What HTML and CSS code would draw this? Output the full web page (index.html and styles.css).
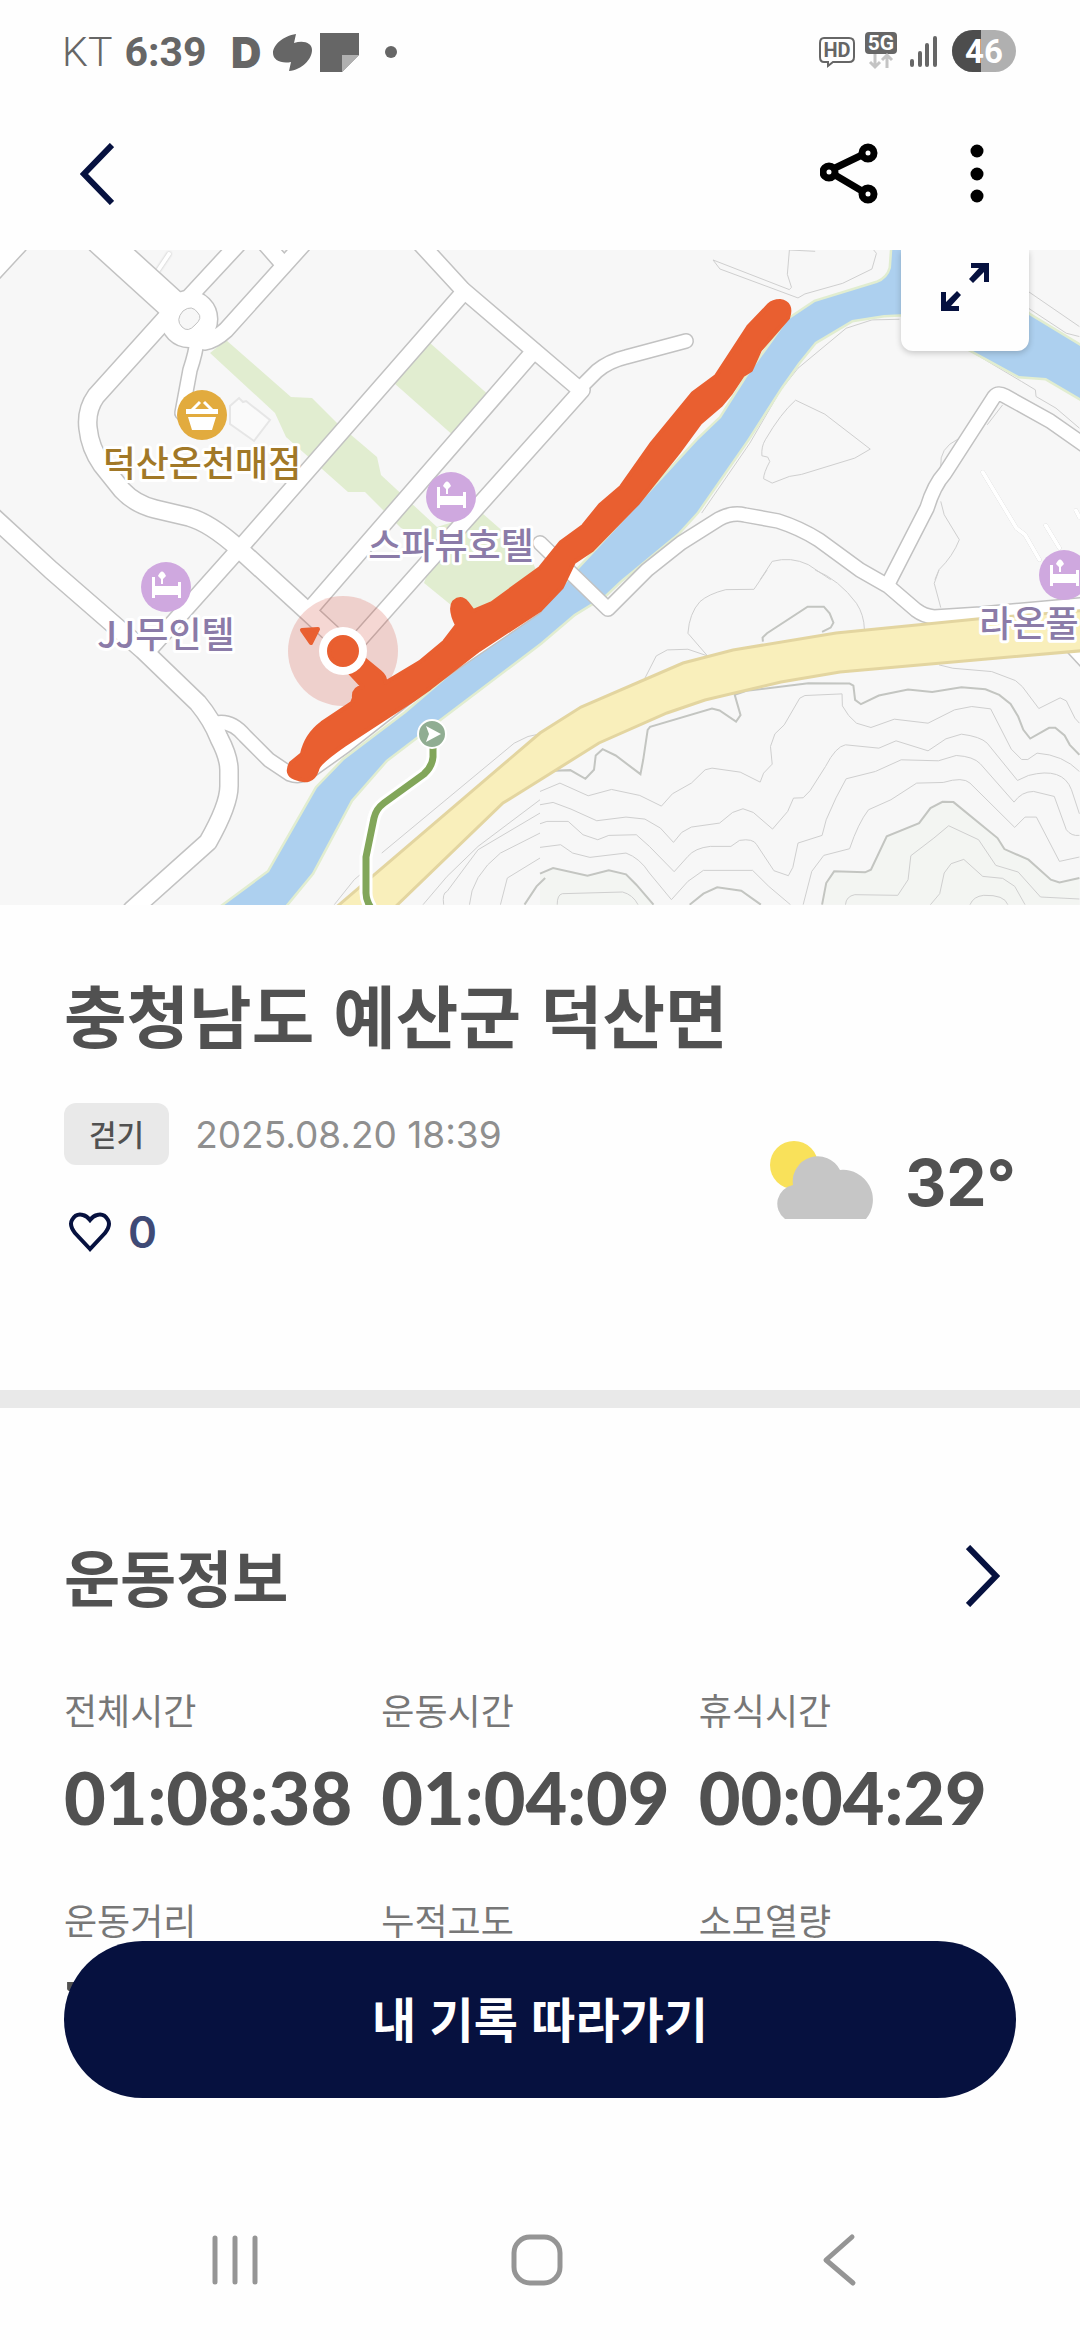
FILE: index.html
```
<!DOCTYPE html>
<html lang="ko">
<head>
    <meta charset="UTF-8">
    <meta name="viewport" content="width=device-width, initial-scale=1.0">
    <title>충청남도 예산군 덕산면</title>
    <link rel="stylesheet" href="styles.css">
</head>
<body>

    <div class="status-bar">
        <div class="status-left">
            <span class="carrier">KT</span>
            <span class="clock">6:39</span>
            <svg class="status-apps" width="176" height="56" viewBox="225 24 176 56">
                <text class="app-d" x="229" y="68">D</text>
                <path d="M294 34 C281 36 271 45 271 53 C271 60 279 64 289 62 L287 71 C300 70 310 59 310 50 C310 43 302 40 292 43 Z"/>
                <path d="M318 33 H357 V55 L340 72 H318 Z"/>
                <path class="fold" d="M340 55 H357 L340 72 Z"/>
                <circle cx="389" cy="52" r="6"/>
            </svg>
        </div>
        <svg class="status-right" width="200" height="44" viewBox="818 30 200 44">
            <path class="line" d="M824 38 H849 Q854 38 854 43 V57 Q854 62 849 62 H833 L828 66 V62 H824 Q820 62 820 57 V43 Q820 38 824 38 Z"/>
            <text class="hd" x="837" y="57">HD</text>
            <rect x="865" y="32" width="32" height="22" rx="4"/>
            <text class="fiveg" x="881" y="50">5G</text>
            <path class="arrows" d="M875 54 V67 M870 62 L875 67 L880 62 M887 68 V55 M882 60 L887 55 L892 60"/>
            <path class="signal" d="M912 61 V65 M920 53 V65 M927 45 V65 M935 38 V65"/>
            <rect class="battery-rest" x="952" y="30" width="64" height="42" rx="21"/>
            <path class="battery-full" d="M981 30 H973 A21 21 0 0 0 973 72 H981 Z"/>
            <text class="battery-text" x="984" y="63">46</text>
        </svg>
    </div>

    <header class="app-bar">
        <button class="icon-button" type="button" aria-label="뒤로">
            <svg width="34" height="62" viewBox="0 0 34 62"><path class="chevron" d="M32 2 L4 31 L32 60"/></svg>
        </button>
        <div class="app-actions">
            <button class="icon-button" type="button" aria-label="공유">
                <svg width="58" height="62" viewBox="821 145 58 62">
                    <path class="share" d="M836 170 L863 157 M836 177 L863 193"/>
                    <circle class="share" cx="830" cy="174" r="6"/>
                    <circle class="share" cx="869" cy="155" r="6"/>
                    <circle class="share" cx="869" cy="196" r="6"/>
                </svg>
            </button>
            <button class="icon-button" type="button" aria-label="더보기">
                <svg width="14" height="62" viewBox="0 0 14 62">
                    <circle cx="7" cy="8" r="6.5"/><circle cx="7" cy="31" r="6.5"/><circle cx="7" cy="53" r="6.5"/>
                </svg>
            </button>
        </div>
    </header>

    <div class="map">
        <svg class="map-svg" viewBox="0 250 1080 655" preserveAspectRatio="xMidYMid slice">
            <defs>
                <g id="roads">
                    <path class="road w24" d="M-9 269 L16 242"/>
                    <path class="road w30" d="M101 240 L178 310"/>
                    <path class="road w18" d="M178 305 L96 396 Q86 410 88 428 Q90 448 102 465 L122 490 Q135 504 155 509 L189 517 Q210 523 238 548 L306 610 L332 634"/>
                    <path class="road w16" d="M242 240 L190 296"/>
                    <path class="road w16" d="M307 240 L226 330 Q215 340 205 342"/>
                    <path class="road w16" d="M262 240 L284 265"/>
                    <path class="road w14" d="M197 340 Q196 352 190 370 L182 413"/>
                    <circle class="road w38" cx="189" cy="319" r="10"/>
                    <path class="road w16" d="M463 293 L240 548 L148 651"/>
                    <path class="road w16" d="M417 240 L463 290 L578 388"/>
                    <path class="road w16" d="M534 351 L344 570 L312 607"/>
                    <path class="road w16" d="M582 390 L421 570 L358 641"/>
                    <path class="road w14" d="M578 390 L597 371 Q609 361 626 357 L686 341"/>
                    <path class="road w18" d="M-10 514 L51 570 L143 650 L198 703 Q212 720 219 738 Q229 757 229 770 V786 Q229 805 208 842 L132 910"/>
                    <path class="road w14" d="M212 724 Q230 718 245 736 L269 760 L290 774 Q300 778 310 771 L345 746 L425 683 L535 608"/>
                    <path class="road w14" d="M540 543 L608 609 L647 570 L681 543 L719 519 Q732 512 745 515 L778 521 Q800 528 819 540 L860 570 L888 586 L916 610 Q924 616 934 617 L981 614 L1090 604"/>
                    <path class="road w14" d="M888 584 L927 508 Q934 485 945 473 L994 397 Q998 392 1005 396 L1050 421 L1090 449"/>
                    <path class="road w14" d="M1066 640 L1090 666"/>
                </g>
            </defs>

            <rect class="land" x="0" y="250" width="1080" height="655"/>

            <!-- parks -->
            <path class="park" d="M226 340 L291 397 L312 398 L337 423 L377 457 L381 475 L437 527 L482 513 L530 555 L540 580 L475 612 L451 605 L424 583 L437 545 L401 528 L365 492 L348 492 L286 437 L275 413 L210 353 Z"/>
            <path class="park" d="M430 343 L491 397 L455 437 L394 383 Z"/>

            <!-- contour lines -->
            <g class="contour" transform="translate(540 570) scale(.344 .333)">
                <path class="hill" d="M0 912 L38 895 L138 918 L200 902 L250 914 L280 945 L330 1010 H0 Z M820 1005 L832 940 L855 905 L945 908 L962 900 L1008 800 L1102 760 L1135 715 L1170 696 L1202 697 L1330 805 L1350 838 L1420 870 L1485 930 L1510 938 L1568 925 V1005 Z"/>
                <path class="thick" d="M40 603 L88 601 L132 627 L157 600 L162 557 L182 538 L220 557 L292 613 L300 570 L313 480 L320 471 L500 416 L522 422 L570 455 L583 436 L566 375 L600 363 L780 340 L900 341 L911 347 L916 390 L933 403 L985 377 L1070 359 L1140 366 L1225 352 L1295 358 L1335 375 L1368 402 L1390 440 L1405 480 L1425 506 L1480 474 L1498 474 L1525 497 L1540 525 L1568 555"/>
                <path class="thick" d="M0 912 L38 895 L138 918 L200 902 L250 914 L280 945 L330 1005 M435 1005 L475 972 L515 953 L585 963 L642 1005"/>
                <path class="thick" d="M820 1005 L832 940 L855 905 L945 908 L962 900 L1008 800 L1102 760 L1135 715 L1170 696 L1202 697 L1330 805 L1350 838 L1420 870 L1485 930 L1510 938 L1568 925"/>
                <path class="thick" d="M648 215 L647 203 L660 190 L778 110 L825 110 L842 130 L853 158 L845 173 L820 186"/>
                <path d="M305 325 L338 258 L370 240 L430 238 L487 258 L430 190 Q434 130 465 95 Q490 72 540 59 L622 58 L660 0 M800 0 Q870 30 920 100 Q942 135 943 178"/>
                <path d="M1160 0 L1146 40 L1165 113 M1160 285 L1200 295 L1313 305 L1382 332 L1402 350 L1450 416 L1512 384 L1530 393 L1555 445 L1568 460"/>
                <path d="M0 665 L58 640 L140 678 L208 659 L290 677 L353 709 L385 672 L440 640 L480 600 L500 595 L582 607 L640 637 L650 610 L675 583 L670 530 L683 492 L710 465 L755 385 L770 377 L878 372 L879 408 Q895 440 920 460 L962 473 L1030 448 L1128 460 L1205 420 L1255 410 L1310 417 L1370 538 L1400 569 L1418 569 L1445 550 Q1520 555 1568 605"/>
                <path d="M0 705 L38 698 L90 718 L165 753 L250 742 L305 748 L350 775 L388 818 L412 788 L440 772 L522 760 L560 728 L590 717 L620 728 L676 778 L720 725 L737 685 L765 684 L785 663 L830 590 Q860 530 888 525 L985 535 L1035 513 L1128 543 L1180 507 L1225 493 Q1280 500 1300 520 L1388 632 L1420 617 Q1520 590 1545 660 L1568 732"/>
                <path d="M0 762 L20 755 L82 755 L125 795 L168 810 L200 797 L280 795 L318 830 L390 906 L430 860 Q450 835 495 830 L555 830 L580 812 Q620 805 630 825 L680 903 L722 918 L735 893 L750 820 L820 797 L832 750 Q860 680 890 627 L975 605 L1050 570 L1158 573 L1210 557 Q1260 560 1280 582 L1378 697 Q1400 665 1435 665 L1495 680 L1530 780 Q1545 800 1568 797"/>
                <path d="M0 833 L60 825 L95 850 L145 863 L250 850 Q290 865 318 910 L382 990 L430 935 L475 902 L618 902 L665 950 L728 1005 M765 1005 L790 905 L825 857 L900 837 Q925 760 955 720 L1020 690 L1095 640 L1172 638 Q1230 620 1250 640 L1380 773 L1410 742 L1443 742 L1510 875 L1568 862"/>
                <path d="M50 1005 Q50 975 65 972 L240 967 Q270 975 285 1005 M888 1005 Q890 980 915 975 L1040 977 L1070 930 L1078 858 L1145 805 L1188 768 L1275 810 L1325 887 L1390 907 L1455 982 L1568 988 M1135 1005 L1162 972 L1175 910 L1195 882 L1232 869 L1287 920 L1345 926 L1380 950 L1410 1005 M1250 1005 Q1260 980 1290 977 Q1350 975 1360 1005"/>
                <path d="M-598 1005 L-540 930 L-500 895 M-460 850 L-75 520 L-35 500 L0 492 M-340 1005 L-270 920 L-180 830 L0 690 M-280 1005 Q-285 970 -270 965 L-180 840 L0 730 M-205 1005 Q-200 920 -115 850 L0 790 M-115 1005 L-95 925 L0 865"/>
                <path class="thick" d="M-45 1005 L-10 950 L15 925"/>
            </g>
            <g class="contour" transform="translate(540 240) scale(.344 .333)">
                <path d="M503 60 L725 149 L731 142 L719 103 L725 30 M503 60 L523 87 L750 174 L770 162 L880 130 L965 87 L978 40 L970 30 M725 30 L800 34"/>
                <path d="M743 481 L828 523 L960 628 L915 655 L760 704 L725 710 L675 730 L650 717 Q650 700 668 665 L662 652 L645 648 Q643 620 655 600 Q700 520 743 481 Z"/>
                <path d="M1045 238 L965 240 L890 265 L750 385 L700 450 L610 610 L470 820 M1250 333 L1400 425 L1440 450 L1442 470 L1500 505 L1568 565"/>
                <path d="M1345 495 L1300 555 M1215 598 Q1160 625 1165 680 M1165 785 L1175 825 L1219 900 Q1200 950 1160 990 L1148 1020 M1420 155 L1568 260 M1420 205 L1530 280 L1568 290"/>
                <path d="M640 1020 L675 965 Q730 950 780 975 L845 1020"/>
                <path class="lane" d="M1287 697 L1385 865 L1410 885 L1452 960 M1470 857 L1510 925 M1558 812 L1568 832"/>
            </g>
            <path class="building" d="M230 406 L239 398 L243 402 L246 401 L270 420 L254 441 L230 424 Z"/>
            <path class="lane" d="M169 254 L157 272"/>

            <!-- river -->
            <path class="river" d="M893 240 L891 268 Q888 279 877 283 L815 302 L788 320 L747 377 L721 418 L698 440 L640 503 L578 570 L540 612 L448 677 L406 713 L344 760 L317 788 L269 872 L215 912 L280 912 L312 873 L351 800 L386 760 L441 718 L540 643 L574 614 L605 595 L621 580 L678 533 L697 512 L747 440 L781 387 L798 363 L815 342 L852 320 L884 315 L905 314 L953 340 L1019 376 L1046 378 L1090 404 L1090 352 L1029 315 L960 240 Z"/>

            <use href="#roads" class="road-edge"/>
            <use href="#roads" class="road-fill"/>
            <path class="island" d="M183 311 Q192 304 198 313 Q203 318 195 325 Q188 333 182 327 Q175 320 183 311 Z"/>

            <!-- highway -->
            <path class="highway" d="M333 910 L540 733 L581 707 L683 663 L733 650 L836 633 L977 619 L1090 610 V650 L840 672 L781 682 L705 700 L667 713 L599 743 L540 780 L503 803 L392 910 Z"/>

            <!-- walking trail -->
            <path class="trail-edge" d="M433 746 V757 Q432 767 424 774 L384 803 Q376 809 374 818 L366 857 V893 Q366 900 371 908"/>
            <path class="trail" d="M433 746 V757 Q432 767 424 774 L384 803 Q376 809 374 818 L366 857 V893 Q366 900 371 908"/>
            <circle class="trail-pin" cx="432" cy="734" r="14"/>
            <path class="white" d="M426 726 L441 734 L426 742 L429 734 Z"/>

            <!-- recorded track -->
            <circle class="halo" cx="343" cy="651" r="55"/>
            <path class="track" d="M780 301 Q773 301 769 305 L748 327 L733 350 L716 376 L693 393 L652 443 L621 487 L600 505 L583 526 L561 542 L540 568 L492 603 L473 611 L467 603 Q461 596 454 602 Q449 609 457 625 L444 642 L420 662 L385 683 Q386 677 380 672 L363 658 L349 672 L363 687 Q353 688 354 698 L352 703 L322 723 Q306 735 302 754 L291 763 Q285 774 295 778 Q312 785 317 770 Q318 763 344 745 L413 700 L430 688 L479 650 L540 610 L562 587 L574 562 L592 550 L638 503 L678 453 L700 423 L721 405 L731 393 L743 375 L751 370 L760 350 L788 318 Q793 303 780 301 Z"/>
            <path class="track" d="M302 630 L318 629 L311 643 Z"/>
            <circle class="white" cx="343" cy="651" r="24"/>
            <circle class="track" cx="343" cy="651" r="14"/>

            <!-- places -->
            <circle class="shop-pin" cx="202" cy="415" r="25"/>
            <path class="white" d="M186 409 H218 V414 H186 Z M188 417 H216 L212 430 H192 Z"/>
            <path class="basket" d="M192 410 L200 402 M212 410 L204 402"/>
            <g id="hotel">
                <circle class="hotel-pin" cx="451" cy="497" r="25"/>
                <path class="white" d="M437 487 H440 V496 H463 V492 H466 V508 H463 V505 H440 V508 H437 Z M446 489 L443 486 Q447 477 451 486 L448 489 V494 H446 Z"/>
            </g>
            <use href="#hotel" x="-285" y="90"/>
            <use href="#hotel" x="613" y="78"/>
            <text class="place shop" x="202" y="477">덕산온천매점</text>
            <text class="place" x="451" y="559">스파뷰호텔</text>
            <text class="place" x="166" y="648">JJ무인텔</text>
            <text class="place" x="1029" y="637">라온풀</text>
        </svg>
        <button class="expand-button" type="button" aria-label="지도 확대">
            <svg width="48" height="48" viewBox="0 0 48 48">
                <path d="M30 0 H48 V19 H43 V9 L32 20 L28 16 L38 5 H30 Z M18 48 H0 V29 H5 V39 L16 28 L20 32 L10 43 H18 Z"/>
            </svg>
        </button>
    </div>

    <section class="summary">
        <h1>충청남도 예산군 덕산면</h1>
        <div class="summary-row">
            <div class="summary-info">
                <div class="meta">
                    <span class="badge">걷기</span>
                    <time datetime="2025-08-20T18:39">2025.08.20 18:39</time>
                </div>
                <button class="like-button" type="button" aria-label="좋아요">
                    <svg width="44" height="40" viewBox="0 0 44 40">
                        <path d="M22 37 L7 21 Q1 13 4 8 Q8 1 15 3 Q19 4 22 8 Q25 4 29 3 Q36 1 40 8 Q43 13 37 21 Z"/>
                    </svg>
                    <span>0</span>
                </button>
            </div>
            <div class="weather">
                <svg width="106" height="80" viewBox="769 1140 106 80">
                    <circle class="sun" cx="794" cy="1165" r="24"/>
                    <path class="cloud" d="M785 1219 A19 19 0 0 1 793 1185 A25 25 0 0 1 840 1170 A30 30 0 0 1 866 1219 Z"/>
                </svg>
                <span>32°</span>
            </div>
        </div>
    </section>

    <section class="workout">
        <div class="workout-title">
            <h2>운동정보</h2>
            <button class="icon-button" type="button" aria-label="운동정보 더보기">
                <svg width="34" height="62" viewBox="0 0 34 62"><path class="chevron" d="M2 2 L30 31 L2 60"/></svg>
            </button>
        </div>
        <dl class="stats">
            <div><dt>전체시간</dt><dd>01:08:38</dd></div>
            <div><dt>운동시간</dt><dd>01:04:09</dd></div>
            <div><dt>휴식시간</dt><dd>00:04:29</dd></div>
            <div><dt>운동거리</dt><dd>7</dd></div>
            <div><dt>누적고도</dt></div>
            <div><dt>소모열량</dt></div>
        </dl>
    </section>

    <div class="bottom">
        <button class="follow-button" type="button">내 기록 따라가기</button>
        <nav class="nav-bar">
            <button type="button" aria-label="최근 앱">
                <svg width="46" height="54" viewBox="0 0 46 54"><path d="M3 5 V49 M23 5 V49 M43 5 V49"/></svg>
            </button>
            <button type="button" aria-label="홈">
                <svg width="54" height="54" viewBox="0 0 54 54"><rect x="4" y="4" width="46" height="46" rx="16"/></svg>
            </button>
            <button type="button" aria-label="이전">
                <svg width="36" height="54" viewBox="0 0 36 54"><path d="M31 4 L5 27 L32 50"/></svg>
            </button>
        </nav>
    </div>

</body>
</html>
```
FILE: styles.css
```
* {
    box-sizing: border-box;
}
body {
    margin: 0;
    min-height: 100vh;
    background-color: #fefefe;
    color: #515151;
    font-family: "Noto Sans CJK KR", sans-serif;
}
button {
    padding: 0;
    border: none;
    background: none;
    color: inherit;
    font-family: inherit;
}
svg {
    display: block;
}
h1, h2, dl, dd {
    margin: 0;
}

/* status bar */
.status-bar {
    display: flex;
    justify-content: space-between;
    align-items: center;
    height: 104px;
    padding: 0 62px;
    color: #666;
    font-family: Roboto, sans-serif;
    font-size: 41px;
}
.status-left {
    display: flex;
    align-items: center;
}
.carrier {
    font-weight: 300;
    margin-right: 12px;
}
.clock {
    font-weight: 700;
    margin-right: 20px;
}
.status-bar svg {
    fill: #666;
}
.status-bar text {
    font-weight: 700;
    text-anchor: middle;
}
.status-bar .app-d {
    font-family: Inter, sans-serif;
    font-size: 42px;
    font-weight: 900;
    text-anchor: start;
}
.status-bar .fold, .battery-rest {
    fill: #b0b0b0;
}
.line, .arrows, .signal {
    fill: none;
    stroke: #666;
    stroke-width: 2;
}
.arrows {
    stroke: #c4c4c4;
    stroke-width: 3;
}
.signal {
    stroke-width: 4;
    stroke-linecap: round;
}
.hd {
    font-size: 20px;
}
.fiveg {
    fill: #fff;
    font-size: 21px;
}
.battery-full {
    fill: #4d4d4d;
}
.battery-text {
    fill: #fff;
    font-size: 33px;
}

/* app bar */
.app-bar {
    display: flex;
    justify-content: space-between;
    align-items: center;
    height: 146px;
    padding: 0 96px 6px 80px;
}
.app-actions {
    display: flex;
    gap: 92px;
}
.chevron {
    fill: none;
    stroke: #06113f;
    stroke-width: 6;
}
.share {
    fill: none;
    stroke: #000;
    stroke-width: 7;
}

/* map */
.map {
    position: relative;
}
.map-svg {
    width: 100%;
    height: 655px;
}
.land {
    fill: #f7f7f7;
}
.park {
    fill: #e1edd0;
}
.river {
    fill: #add0ef;
    stroke: #e1edd0;
    stroke-width: 5;
    paint-order: stroke;
}
.road {
    fill: none;
    stroke-width: calc(var(--w) + var(--edge));
    stroke-linecap: round;
    stroke-linejoin: round;
}
.w14 { --w: 13px; }
.w16 { --w: 15px; }
.w18 { --w: 17px; }
.w24 { --w: 24px; }
.w30 { --w: 29px; }
.w38 { --w: 36px; }
.road-edge {
    --edge: 3px;
    stroke: #c2c2c2;
}
.road-fill {
    --edge: 0px;
    stroke: #fff;
}
.island {
    fill: #f7f7f7;
    stroke: #c2c2c2;
    stroke-width: 1;
}
.building {
    fill: #fafafa;
    stroke: #e6e6e6;
    stroke-width: 2;
}
.lane {
    fill: none;
    stroke: #fff;
    stroke-width: 4;
    stroke-linecap: round;
    filter: drop-shadow(0 0 1px #bbb);
}
.contour path {
    fill: none;
    stroke: #cfcfcf;
    stroke-width: 1;
    vector-effect: non-scaling-stroke;
}
.contour .thick {
    stroke: #c3c5c1;
    stroke-width: 2;
}
.contour .hill {
    fill: #f3f5f2;
    stroke: none;
}
.contour .lane {
    stroke: #fff;
    stroke-width: 4;
}
.highway {
    fill: #f9efbb;
    stroke: #e3d5a0;
    stroke-width: 3;
}
.trail, .trail-edge {
    fill: none;
    stroke: #82a65a;
    stroke-width: 7;
}
.trail-edge {
    stroke: #fff;
    stroke-width: 13;
}
.trail-pin {
    fill: #90ad92;
    stroke: #fff;
    stroke-width: 2;
}
.halo {
    fill: #d04030;
    fill-opacity: 0.21;
}
.track {
    fill: #e95f30;
    stroke: #e95f30;
    stroke-width: 4;
    stroke-linejoin: round;
}
.white {
    fill: #fff;
}
.basket {
    fill: none;
    stroke: #fff;
    stroke-width: 3;
}
.shop-pin {
    fill: #e2ab3e;
}
.hotel-pin {
    fill: #cfa8df;
}
.place {
    fill: #8b7ba8;
    stroke: #fff;
    stroke-width: 6;
    stroke-linejoin: round;
    paint-order: stroke;
    font-size: 36px;
    font-weight: 500;
    text-anchor: middle;
}
.shop {
    fill: #a17827;
}
.expand-button {
    position: absolute;
    top: 0;
    right: 51px;
    display: flex;
    justify-content: center;
    width: 128px;
    height: 101px;
    padding-top: 13px;
    border-radius: 0 0 12px 12px;
    background-color: #fefefe;
    box-shadow: 0 2px 6px rgba(0, 0, 0, 0.2);
    clip-path: inset(0 -10px -10px -10px);
}
.expand-button svg {
    fill: #06113f;
}

/* record summary */
.summary {
    padding: 69px 64px 133px;
    border-bottom: 18px solid #e9e9e9;
}
h1 {
    font-size: 68px;
    line-height: 80px;
    font-weight: 700;
    margin-bottom: 49px;
}
.summary-row {
    display: flex;
    justify-content: space-between;
    align-items: center;
}
.meta {
    display: flex;
    align-items: center;
    gap: 26px;
    margin-bottom: 42px;
}
.badge {
    padding: 0 25px 2px;
    border-radius: 12px;
    background-color: #e9e9e9;
    font-size: 30px;
    line-height: 60px;
    font-weight: 500;
}
time {
    color: #8f8f8f;
    font-family: Inter, sans-serif;
    font-size: 37px;
}
.like-button {
    display: flex;
    align-items: center;
    gap: 16px;
    padding-left: 4px;
    color: #3f4a76;
    font-family: Inter, sans-serif;
    font-size: 44px;
    line-height: 50px;
    font-weight: 600;
}
.like-button path {
    fill: none;
    stroke: #06113f;
    stroke-width: 4;
}
.weather {
    display: flex;
    align-items: center;
    gap: 30px;
    font-family: Inter, sans-serif;
    font-size: 64px;
    line-height: 80px;
    font-weight: 700;
}
.weather span {
    padding-top: 5px;
}
.sun {
    fill: #f9e15a;
}
.cloud {
    fill: #c6c6c6;
}

/* workout info */
.workout {
    padding: 133px 64px 0;
}
.workout-title {
    display: flex;
    justify-content: space-between;
    align-items: center;
    padding-right: 16px;
    margin-bottom: 73px;
}
h2 {
    font-size: 61px;
    line-height: 70px;
    font-weight: 700;
}
.stats {
    display: grid;
    grid-template-columns: repeat(3, 1fr);
    row-gap: 57px;
}
dt {
    color: #777;
    font-size: 36px;
    line-height: 50px;
    margin-bottom: 23px;
}
dd {
    font-family: Lato, sans-serif;
    font-size: 72px;
    line-height: 80px;
    font-weight: 900;
}

/* fixed bottom area */
.bottom {
    position: fixed;
    left: 0;
    right: 0;
    bottom: 0;
    display: flex;
    flex-direction: column;
    gap: 82px;
}
.follow-button {
    height: 157px;
    margin: 0 64px;
    padding-bottom: 5px;
    border-radius: 80px;
    background-color: #06113f;
    color: #fff;
    font-size: 48px;
    font-weight: 700;
}
.nav-bar {
    display: flex;
    height: 160px;
    padding: 0 90px 0 84px;
}
.nav-bar button {
    flex: 1;
    display: flex;
    justify-content: center;
    align-items: center;
}
.nav-bar svg {
    fill: none;
    stroke: #959595;
    stroke-width: 5;
    stroke-linecap: round;
    stroke-linejoin: round;
}
```
